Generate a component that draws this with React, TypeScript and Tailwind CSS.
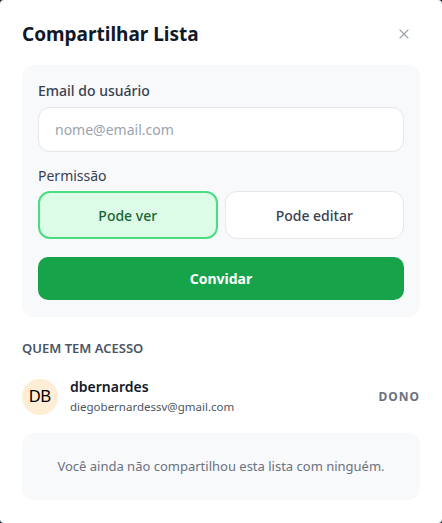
import React from 'react';
import { X } from 'lucide-react';

export default function App() {
  const [permission, setPermission] = React.useState<'view' | 'edit'>('view');
  const [email, setEmail] = React.useState('');

  return (
    <div className="h-[523px] w-[442px] bg-[#1f2937]" style={{ fontFamily: '"Noto Sans", "Open Sans", sans-serif' }}>
      <div className="h-full w-full rounded-[4px] bg-white px-[22px] pt-[20px]">
        <div className="flex items-center justify-between">
          <h2 className="text-[19px] font-bold leading-[28px] text-[#111827]">Compartilhar Lista</h2>
          <button className="mr-[8px] text-[#9ca3af]" aria-label="Fechar">
            <X className="h-[16px] w-[16px]" strokeWidth={1.75} />
          </button>
        </div>

        <div className="mt-[17px] rounded-[12px] bg-[#f8f9fb] px-[16px] pb-[17px] pt-[16px]">
          <label className="block text-[14px] font-medium leading-[20px] text-[#374151]">Email do usuário</label>
          <input
            value={email}
            onChange={(e) => setEmail(e.target.value)}
            placeholder="nome@email.com"
            className="mt-[6px] h-[45px] w-full rounded-[12px] border border-[#e5e7eb] bg-white px-[16px] text-[14px] text-[#111827] outline-none placeholder:text-[#9ca3af]"
          />

          <div className="mt-[14px] text-[14px] leading-[20px] text-[#374151]">Permissão</div>
          <div className="mt-[5px] grid grid-cols-2 gap-[7px]">
            <button
              onClick={() => setPermission('view')}
              className={`h-[48px] rounded-[12px] text-[14px] font-medium ${
                permission === 'view'
                  ? 'border-2 border-[#4ade80] bg-[#dcfce7] text-[#166534]'
                  : 'border border-[#e5e7eb] bg-white text-[#374151]'
              }`}
            >
              Pode ver
            </button>
            <button
              onClick={() => setPermission('edit')}
              className={`h-[48px] rounded-[12px] text-[14px] font-medium ${
                permission === 'edit'
                  ? 'border-2 border-[#4ade80] bg-[#dcfce7] text-[#166534]'
                  : 'border border-[#e5e7eb] bg-white text-[#374151]'
              }`}
            >
              Pode editar
            </button>
          </div>

          <button className="mt-[18px] h-[43px] w-full rounded-[10px] bg-[#16a34a] text-[14px] font-bold text-white">
            Convidar
          </button>
        </div>

        <div className="mt-[22px] text-[13px] font-semibold uppercase leading-[18px] text-[#4b5563]">Quem tem acesso</div>

        <div className="mt-[21px] flex items-center">
          <div
            className="flex h-[36px] w-[36px] items-center justify-center rounded-full bg-[#ffedd5] text-[16px] text-black"
            style={{ fontFamily: '"Liberation Sans", Arial, sans-serif' }}
          >
            DB
          </div>
          <div className="ml-[12px] flex-1">
            <div className="text-[14px] font-semibold leading-[18px] text-[#111827]">dbernardes</div>
            <div className="mt-[3px] text-[11.5px] leading-[16px] text-[#4b5563]">diegobernardessv@gmail.com</div>
          </div>
          <div className="text-[12px] font-bold tracking-[1px] text-[#6b7280]">DONO</div>
        </div>

        <div className="mt-[18px] flex h-[67px] items-center justify-center rounded-[12px] bg-[#f8f9fb] text-[13px] text-[#6b7280]">
          Você ainda não compartilhou esta lista com ninguém.
        </div>
      </div>
    </div>
  );
}
